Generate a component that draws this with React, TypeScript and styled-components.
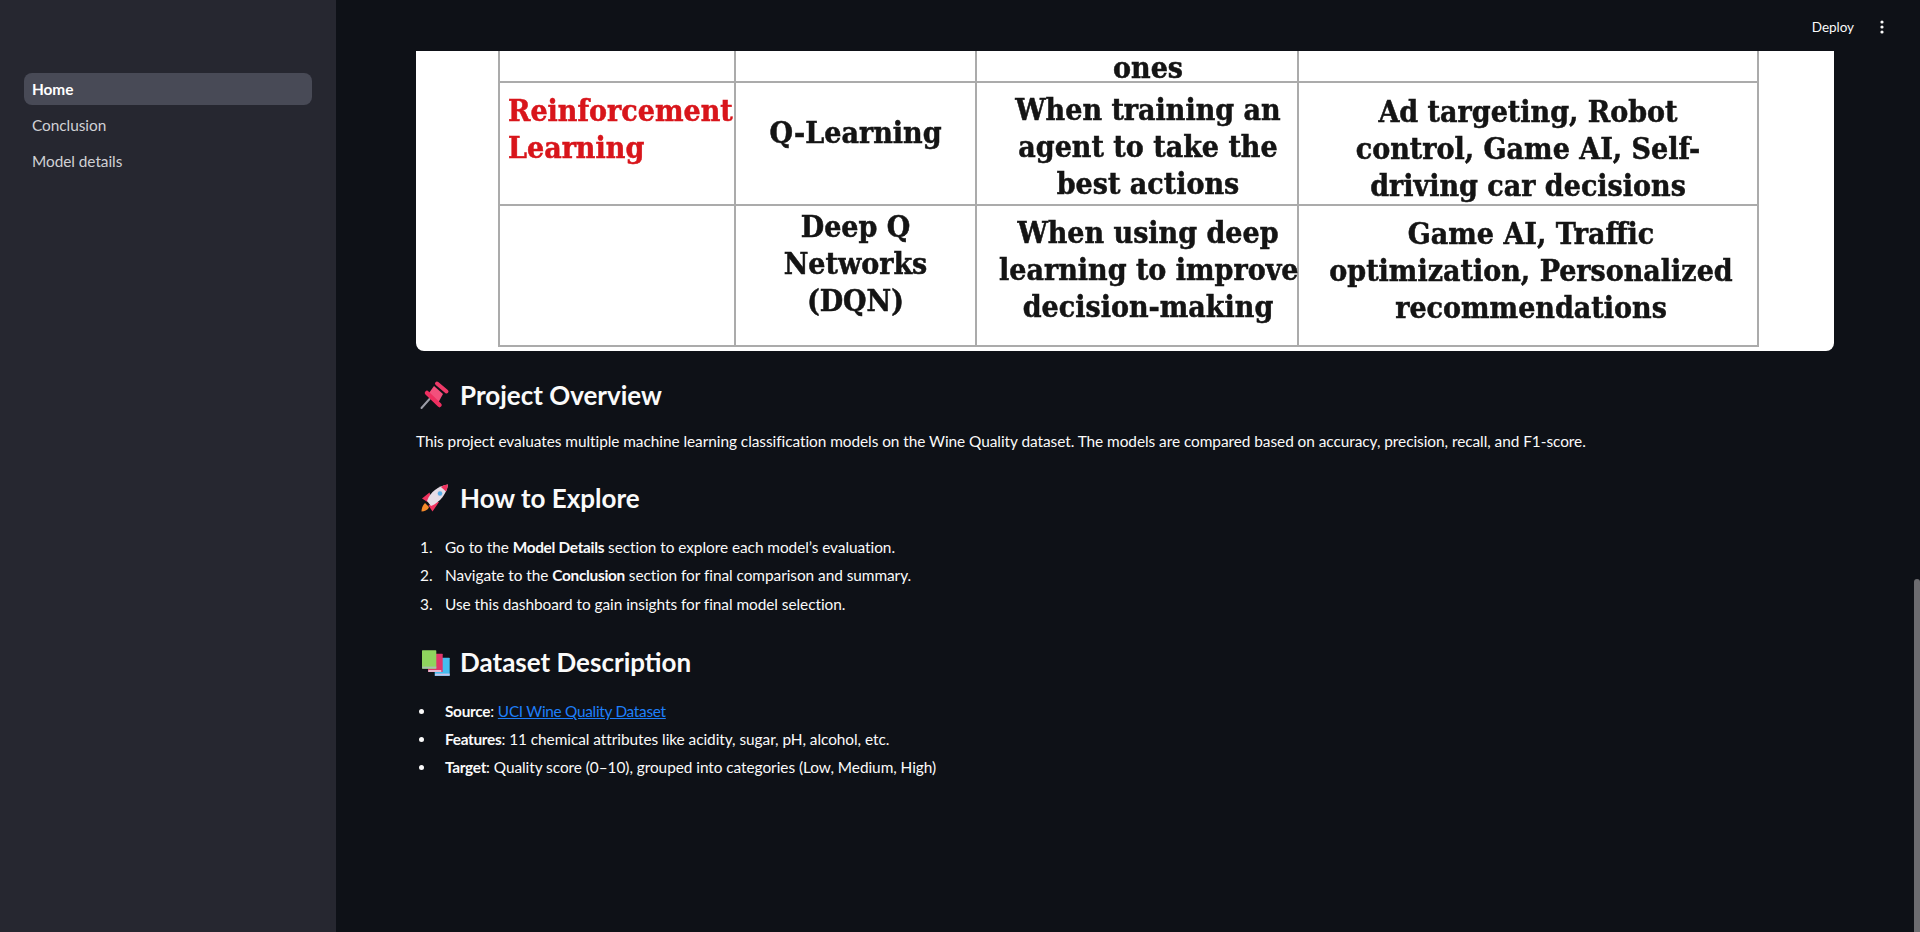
import React from "react";
import styled, { createGlobalStyle } from "styled-components";

const GlobalStyle = createGlobalStyle`
  html, body {
    margin: 0;
    height: 100%;
    overflow: hidden;
    background: #0e1117;
  }
  * {
    box-sizing: border-box;
  }
`

const Shell = styled.div`
  display: flex;
  position: relative;
  height: 932px;
  overflow: hidden;
  font-family: Lato, "Noto Sans", sans-serif;
  font-size: 15.4px;
  letter-spacing: -0.05px;
  color: #fafafa;
`

const Sidebar = styled.nav`
  display: flex;
  flex-direction: column;
  flex: 0 0 336px;
  gap: 4px;
  padding: 73px 24px 0;
  background: #262730;
`

const NavItem = styled.div<{ $active?: boolean }>`
  display: flex;
  align-items: center;
  height: 32px;
  padding: 0 8px;
  border-radius: 8px;
  background: ${(p) => (p.$active ? "#484a56" : "transparent")};
  color: ${(p) => (p.$active ? "#fff" : "#d0d1d5")};
  font-weight: ${(p) => (p.$active ? 700 : 400)};
`

const Main = styled.main`
  display: flex;
  flex-direction: column;
  flex: 1;
  min-width: 0;
`

const Header = styled.header`
  display: flex;
  align-items: center;
  justify-content: flex-end;
  flex: 0 0 51px;
  gap: 26px;
  padding: 3px 36px 0 0;
  font-size: 13.5px;
`

const MenuDots = styled.svg`
  width: 4px;
  height: 14px;
`

const Content = styled.div`
  display: flex;
  flex-direction: column;
  padding: 0 86px 0 80px;
`

const Picture = styled.div`
  display: flex;
  height: 300px;
  padding: 0 75px 4px 82px;
  background: #fff;
  border-radius: 0 0 8px 8px;
  overflow: hidden;
`

const PictureTable = styled.div`
  display: grid;
  flex: 1;
  grid-template-columns: 236px 241px 322px 1fr;
  grid-template-rows: 32px 123px 141px;
  border-left: 2px solid #ababab;
  border-right: 2px solid #ababab;
  border-bottom: 2px solid #ababab;
  font-family: "DejaVu Serif Condensed", "DejaVu Serif", serif;
  font-weight: 700;
  font-size: 30px;
  line-height: 37px;
  letter-spacing: 0;
  color: #141414;
  text-align: center;
  -webkit-text-stroke: 0.5px #141414;
  filter: blur(0.6px);
`

const PictureCell = styled.div<{ $last?: boolean; $pad?: string }>`
  display: flex;
  flex-direction: column;
  padding: ${(p) => p.$pad || "0"};
  border-right: ${(p) => (p.$last ? "none" : "2px solid #ababab")};
  border-bottom: 2px solid #ababab;
  white-space: nowrap;
`

const ShortLine = styled.div`
  line-height: 30px;
`

const RedLabel = styled.div`
  color: #d8151b;
  -webkit-text-stroke: 0.5px #d8151b;
  text-align: left;
`

const Section = styled.section<{ $gap: number }>`
  display: flex;
  flex-direction: column;
  margin-top: ${(p) => p.$gap}px;
`

const Heading = styled.h3`
  display: flex;
  align-items: center;
  gap: 10px;
  height: 44px;
  margin: 0;
  padding-left: 4px;
  font-size: 26px;
  font-weight: 700;
  line-height: 44px;
  letter-spacing: 0;
`

const EmojiIcon = styled.svg`
  flex: 0 0 30px;
  width: 30px;
  height: 30px;
`

const Paragraph = styled.p`
  height: 28px;
  margin: 10px 0 0;
  line-height: 28px;
`

const OrderedList = styled.ol`
  margin: 13px 0 0;
  padding: 0;
  list-style: none;
  counter-reset: step;
`

const BulletList = styled.ul`
  margin: 13px 0 0;
  padding: 0;
  list-style: none;
`

const ListRow = styled.li`
  position: relative;
  height: 28.3px;
  padding-left: 29px;
  line-height: 28.3px;
`

const NumberRow = styled(ListRow)`
  counter-increment: step;

  &::before {
    content: counter(step) ".";
    position: absolute;
    left: 4px;
  }
`

const BulletRow = styled(ListRow)`
  &::before {
    content: "";
    position: absolute;
    top: 12px;
    left: 3px;
    width: 5px;
    height: 5px;
    border-radius: 50%;
    background: #fafafa;
  }
`

const Strong = styled.b`
  letter-spacing: -0.3px;
`

const DocLink = styled.a`
  color: #1e7ffa;
  text-decoration: underline;
  letter-spacing: -0.3px;
`

const Thumb = styled.div`
  position: absolute;
  top: 579px;
  right: 0;
  bottom: 0;
  width: 6px;
  border-radius: 3px 3px 0 0;
  background: #6c6c70;
`

const PinEmoji = () => (
  <EmojiIcon viewBox="0 0 30 30">
    <path d="M1.5 28 L9.5 19" stroke="#9a9ca6" strokeWidth="2" strokeLinecap="round" />
    <path d="M14 6 L23 14 L18 23 L9 13 Z" fill="#f2507c" />
    <path d="M7 13 L19.5 25" stroke="#ee2f60" strokeWidth="4.5" strokeLinecap="round" />
    <path d="M17 3.5 L26.5 11.5" stroke="#ee3a68" strokeWidth="4" strokeLinecap="round" />
  </EmojiIcon>
)

const RocketEmoji = () => (
  <EmojiIcon viewBox="0 0 30 30">
    <path d="M5 20 L9 24 C8 27 5 28.5 1.5 28.5 C1.5 25 3 22 5 20 Z" fill="#f58a2a" />
    <path d="M9.5 9.5 L2 15.5 L7.5 19 L11 14 Z" fill="#f0335f" />
    <path d="M19 19 L12.5 28.5 L8.5 22.5 L14 19 Z" fill="#f0335f" />
    <path d="M28 1.5 C19 2.5 10 9 7 18 L11 23 C20 19.5 27 10 28 1.5 Z" fill="#e5dde6" />
    <path d="M28 1.5 C25 1.8 23 2.6 21 4 L26 8.5 C27 6.4 27.8 4 28 1.5 Z" fill="#f0335f" />
    <circle cx="20" cy="10.5" r="3" fill="#dcd4e2" />
    <circle cx="20" cy="10.5" r="2.2" fill="#55aeea" />
  </EmojiIcon>
)

const BooksEmoji = () => (
  <EmojiIcon viewBox="0 0 30 30">
    <rect x="14.7" y="10.7" width="15" height="18.3" rx="0.6" fill="#45bdf0" />
    <rect x="15" y="26.6" width="14.7" height="2" fill="#c9c4e8" />
    <rect x="8" y="6.7" width="14.7" height="18.3" rx="0.6" fill="#e0356a" />
    <rect x="8.3" y="23" width="13" height="2" fill="#e6b8d0" />
    <rect x="2" y="3.3" width="14.3" height="18.4" rx="0.6" fill="#8fd45e" />
    <rect x="2.3" y="19.6" width="14" height="2" fill="#a8bfb0" />
  </EmojiIcon>
)

const App = () => {
  return (
    <>
      <GlobalStyle />
      <Shell>
        <Sidebar>
          <NavItem $active>Home</NavItem>
          <NavItem>Conclusion</NavItem>
          <NavItem>Model details</NavItem>
        </Sidebar>
        <Main>
          <Header>
            <span>Deploy</span>
            <MenuDots viewBox="0 0 4 14">
              <circle cx="2" cy="2" r="1.6" fill="#fafafa" />
              <circle cx="2" cy="7" r="1.6" fill="#fafafa" />
              <circle cx="2" cy="12" r="1.6" fill="#fafafa" />
            </MenuDots>
          </Header>
          <Content>
            <Picture>
              <PictureTable>
                <PictureCell />
                <PictureCell />
                <PictureCell $pad="2px 0 0 22px"><ShortLine>ones</ShortLine></PictureCell>
                <PictureCell $last />
                <PictureCell $pad="9px 0 0 8px">
                  <RedLabel>Reinforcement</RedLabel>
                  <RedLabel>Learning</RedLabel>
                </PictureCell>
                <PictureCell $pad="31px 0 0">Q-Learning</PictureCell>
                <PictureCell $pad="8px 0 0 22px">
                  <div>When training an</div>
                  <div>agent to take the</div>
                  <div>best actions</div>
                </PictureCell>
                <PictureCell $last $pad="10px 0 0">
                  <div>Ad targeting, Robot</div>
                  <div>control, Game AI, Self-</div>
                  <div>driving car decisions</div>
                </PictureCell>
                <PictureCell />
                <PictureCell $pad="2px 0 0">
                  <div>Deep Q</div>
                  <div>Networks</div>
                  <div>(DQN)</div>
                </PictureCell>
                <PictureCell $pad="8px 0 0 22px">
                  <div>When using deep</div>
                  <div>learning to improve</div>
                  <div>decision-making</div>
                </PictureCell>
                <PictureCell $last $pad="9px 0 0 6px">
                  <div>Game AI, Traffic</div>
                  <div>optimization, Personalized</div>
                  <div>recommendations</div>
                </PictureCell>
              </PictureTable>
            </Picture>

            <Section $gap={22}>
              <Heading><PinEmoji />Project Overview</Heading>
              <Paragraph>
                This project evaluates multiple machine learning classification models on the Wine Quality dataset. The models are compared based on accuracy, precision, recall, and F1-score.
              </Paragraph>
            </Section>

            <Section $gap={21}>
              <Heading><RocketEmoji />How to Explore</Heading>
              <OrderedList>
                <NumberRow>Go to the <Strong>Model Details</Strong> section to explore each model’s evaluation.</NumberRow>
                <NumberRow>Navigate to the <Strong>Conclusion</Strong> section for final comparison and summary.</NumberRow>
                <NumberRow>Use this dashboard to gain insights for final model selection.</NumberRow>
              </OrderedList>
            </Section>

            <Section $gap={22}>
              <Heading><BooksEmoji />Dataset Description</Heading>
              <BulletList>
                <BulletRow><Strong>Source</Strong>: <DocLink href="#">UCI Wine Quality Dataset</DocLink></BulletRow>
                <BulletRow><Strong>Features</Strong>: 11 chemical attributes like acidity, sugar, pH, alcohol, etc.</BulletRow>
                <BulletRow><Strong>Target</Strong>: Quality score (0–10), grouped into categories (Low, Medium, High)</BulletRow>
              </BulletList>
            </Section>
          </Content>
        </Main>
        <Thumb />
      </Shell>
    </>
  )
}

export default App
